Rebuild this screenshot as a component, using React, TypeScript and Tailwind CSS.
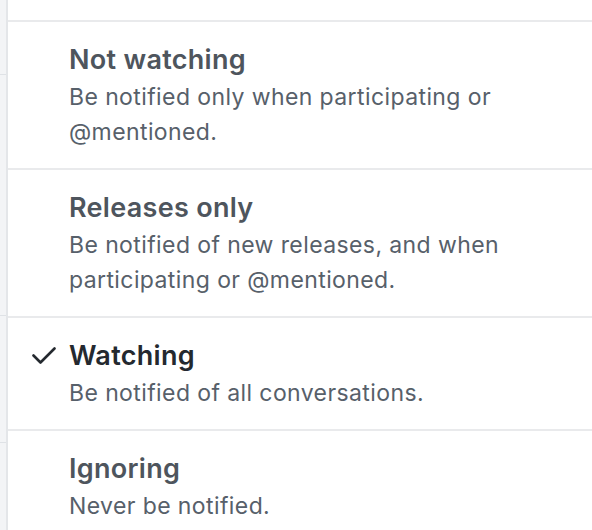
type Option = {
  title: string;
  description: string;
  selected?: boolean;
};

const options: Option[] = [
  { title: "Not watching", description: "Be notified only when participating or @mentioned." },
  { title: "Releases only", description: "Be notified of new releases, and when participating or @mentioned." },
  { title: "Watching", description: "Be notified of all conversations.", selected: true },
  { title: "Ignoring", description: "Never be notified." },
];

function CheckMark() {
  return (
    <svg width="24" height="18" viewBox="0 0 24 18" fill="none" className="text-[#24292f]">
      <path d="M1.5 8.5 L8.5 15.5 L22.5 1.5" stroke="currentColor" strokeWidth="2.6" strokeLinecap="round" strokeLinejoin="round" />
    </svg>
  );
}

export default function App() {
  return (
    <div className="flex h-[530px] w-[592px] overflow-hidden bg-white font-['Inter',sans-serif]">
      {/* page behind the menu */}
      <div className="flex w-[8px] flex-col border-r-2 border-[#e4e6e9] bg-[#f3f4f6]">
        <div className="h-[75px] border-b border-[#dfe2e6]" />
        <div className="h-[241px] border-b border-[#dfe2e6]" />
        <div className="h-[127px] border-b border-[#dfe2e6]" />
        <div className="flex-1" />
      </div>

      <div className="flex-1">
        <div className="h-[20px]" />
        {options.map((o) => (
          <div key={o.title} className="flex border-t-2 border-[#e9eaec] pt-[21px] pb-[18px]">
            <div className="flex h-[34px] w-[61px] shrink-0 items-center pl-[24px]">
              {o.selected && <CheckMark />}
            </div>
            <div className="pr-[40px]">
              <div
                className={
                  "text-[27px] leading-[34px] font-semibold tracking-[0.3px] " +
                  (o.selected ? "text-[#24292f]" : "text-[#4e555d]")
                }
              >
                {o.title}
              </div>
              <p className="mt-[3px] max-w-[460px] text-[23px] leading-[35px] tracking-[0.4px] text-[#57606a]">
                {o.description}
              </p>
            </div>
          </div>
        ))}
      </div>
    </div>
  );
}
